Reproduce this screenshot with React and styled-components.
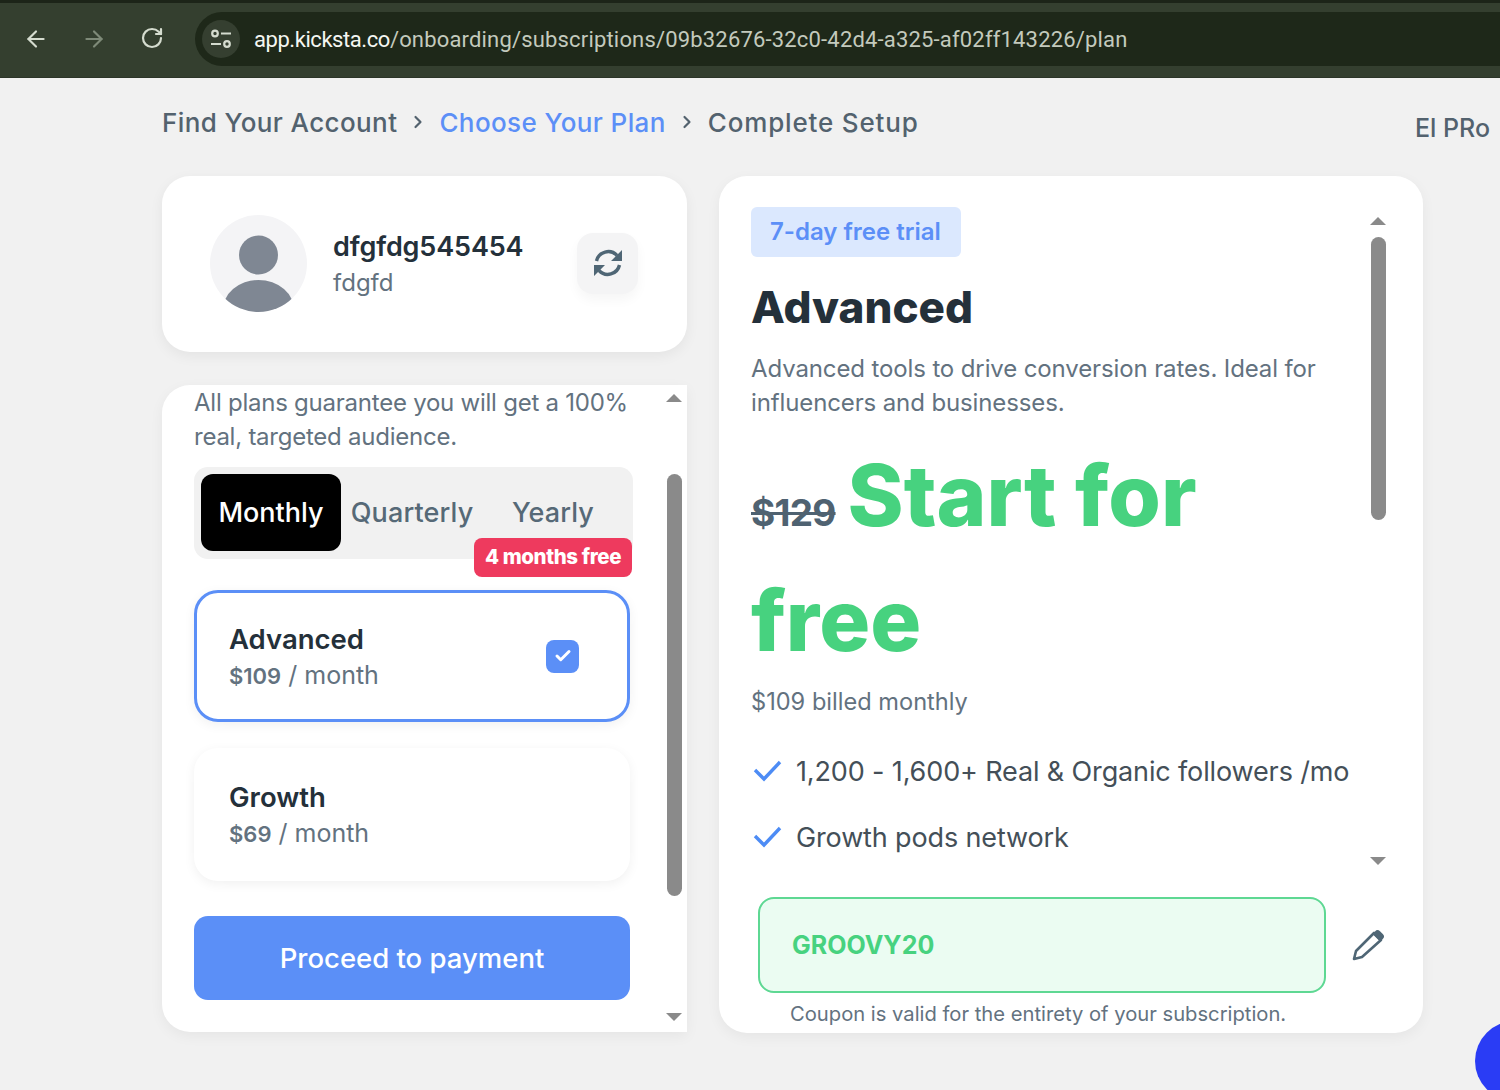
import React from "react";
import styled, { createGlobalStyle } from "styled-components";
import { ArrowLeft, ArrowRight, RotateCw, Check, ChevronRight } from "lucide-react";

const Global = createGlobalStyle`
  html, body {
    margin: 0;
    padding: 0;
    background: #f1f1f1;
    font-family: Inter, "Liberation Sans", sans-serif;
    overflow: hidden;
  }
  * { box-sizing: border-box; }
`;

const Page = styled.div`
  position: relative;
  width: 1500px;
  height: 1090px;
  overflow: hidden;
  display: flex;
  flex-direction: column;
`;

const BrowserBar = styled.div`
  height: 78px;
  flex: none;
  display: flex;
  align-items: center;
  padding-bottom: 2px;
  background: #343f2f;
  border-top: 3px solid #1c2418;
  border-bottom: 1px solid #2c3528;
`;

const NavButton = styled.div`
  width: 58px;
  flex: none;
  display: flex;
  justify-content: center;
  color: ${(p) => (p.$dim ? "#7e8a78" : "#d5dccf")};
`;

const NavGroup = styled.div`
  display: flex;
  margin-left: 7px;
  margin-right: 14px;
`;

const Address = styled.div`
  flex: 1;
  height: 54px;
  display: flex;
  align-items: center;
  gap: 14px;
  padding-left: 7px;
  background: #1e2819;
  border-radius: 27px 0 0 27px;
`;

const TuneBadge = styled.div`
  width: 38px;
  height: 38px;
  border-radius: 50%;
  background: #353f30;
  display: flex;
  align-items: center;
  justify-content: center;
  color: #d5dccf;
`;

const Url = styled.div`
  font-family: Roboto, sans-serif;
  font-size: 22px;
  letter-spacing: 0.008em;
  color: #c3cabd;
  white-space: nowrap;
  b {
    font-weight: 400;
    letter-spacing: -0.02em;
    color: #f4f6f1;
  }
`;

const Main = styled.div`
  flex: 1;
  padding: 0 10px 0 162px;
  display: flex;
  flex-direction: column;
`;

const Crumbs = styled.div`
  height: 98px;
  flex: none;
  display: flex;
  align-items: flex-start;
  justify-content: space-between;
`;

const Steps = styled.div`
  display: flex;
  align-items: center;
  height: 88px;
`;

const Step = styled.span`
  font-size: 26px;
  font-weight: 500;
  letter-spacing: ${(p) => (p.$wide ? "0.032em" : "0.015em")};
  color: ${(p) => (p.$active ? "#5c8ff7" : "#53626e")};
`;

const Sep = styled.span`
  width: 42px;
  display: flex;
  justify-content: center;
  color: #53626e;
`;

const UserName = styled.div`
  margin-top: 35px;
  font-size: 25px;
  font-weight: 500;
  color: #53626e;
`;

const Columns = styled.div`
  display: flex;
  gap: 32px;
  align-items: flex-start;
`;

const LeftColumn = styled.div`
  width: 525px;
  display: flex;
  flex-direction: column;
  gap: 33px;
`;

const ProfileCard = styled.div`
  height: 176px;
  padding: 0 49px 2px 48px;
  background: #fff;
  border-radius: 28px;
  box-shadow: 0 4px 14px rgba(0, 0, 0, 0.06);
  display: flex;
  align-items: center;
`;

const Avatar = styled.svg`
  width: 97px;
  height: 97px;
  flex: none;
  margin-right: 26px;
`;

const ProfileText = styled.div`
  flex: 1;
  padding-top: 4px;
`;

const Handle = styled.div`
  font-size: 27px;
  line-height: 36px;
  font-weight: 600;
  color: #24303a;
  letter-spacing: -0.005em;
`;

const FullName = styled.div`
  font-size: 24px;
  line-height: 36px;
  color: #63727f;
`;

const RefreshButton = styled.div`
  width: 61px;
  height: 61px;
  border-radius: 16px;
  background: #f4f4f5;
  box-shadow: 0 6px 12px rgba(0, 0, 0, 0.04);
  display: flex;
  align-items: center;
  justify-content: center;
  color: #4f6675;
`;

const PlansPanel = styled.div`
  height: 647px;
  background: #fff;
  border-radius: 28px 0 0 28px;
  display: flex;
  padding-left: 32px;
  box-shadow: 0 4px 14px rgba(0, 0, 0, 0.05);
`;

const PlansBody = styled.div`
  width: 439px;
  display: flex;
  flex-direction: column;
`;

const Guarantee = styled.div`
  margin-top: 1px;
  font-size: 24px;
  line-height: 34px;
  color: #63727f;
  letter-spacing: -0.01em;
  white-space: nowrap;
`;

const Tabs = styled.div`
  position: relative;
  margin-top: 13px;
  height: 92px;
  padding: 7px;
  background: #f1f1f1;
  border-radius: 14px;
  display: flex;
`;

const Tab = styled.div`
  width: ${(p) => p.$w}px;
  height: 77px;
  border-radius: 12px;
  display: flex;
  align-items: center;
  justify-content: center;
  font-size: 27px;
  font-weight: 500;
  letter-spacing: ${(p) => (p.$active ? "0" : "0.005em")};
  background: ${(p) => (p.$active ? "#000" : "transparent")};
  color: ${(p) => (p.$active ? "#fff" : "#566977")};
`;

const FreeBadge = styled.div`
  position: absolute;
  right: 1px;
  top: 71px;
  width: 158px;
  height: 39px;
  padding-bottom: 2px;
  background: #ee3a5e;
  border-radius: 8px;
  display: flex;
  align-items: center;
  justify-content: center;
  font-size: 20.5px;
  font-weight: 800;
  letter-spacing: -0.02em;
  color: #fff;
`;

const PlanCard = styled.div`
  width: 436px;
  height: ${(p) => (p.$selected ? 132 : 133)}px;
  margin-top: ${(p) => p.$mt}px;
  padding: 0 ${(p) => (p.$selected ? 48 : 33)}px 0 ${(p) => (p.$selected ? 32 : 35)}px;
  border-radius: 24px;
  background: #fff;
  border: ${(p) => (p.$selected ? "3px solid #5b8ff7" : "0")};
  box-shadow: 0 3px 12px rgba(0, 0, 0, 0.06);
  display: flex;
  align-items: center;
  justify-content: space-between;
`;

const PlanText = styled.div`
  padding-top: 2px;
`;

const PlanName = styled.div`
  font-size: 27.5px;
  line-height: 36px;
  font-weight: 600;
  color: #24303a;
`;

const PlanPrice = styled.div`
  font-size: 25px;
  line-height: 36px;
  color: #63727f;
  b {
    font-size: 22px;
    font-weight: 600;
  }
`;

const Tick = styled.div`
  width: 33px;
  height: 33px;
  border-radius: 8px;
  background: #5b8ff7;
  color: #fff;
  display: flex;
  align-items: center;
  justify-content: center;
`;

const PayButton = styled.div`
  width: 436px;
  height: 84px;
  margin-top: 35px;
  border-radius: 14px;
  background: #5b8ff7;
  display: flex;
  align-items: center;
  justify-content: center;
  color: #fff;
  font-size: 27.5px;
  font-weight: 500;
`;

const Scrollbar = styled.div`
  width: 20px;
  margin-left: ${(p) => p.$ml || 0}px;
  flex: none;
  height: ${(p) => p.$h}px;
  display: flex;
  flex-direction: column;
  align-items: center;
`;

const ArrowUp = styled.div`
  width: 0;
  height: 0;
  margin-top: ${(p) => p.$mt}px;
  border-left: 8px solid transparent;
  border-right: 8px solid transparent;
  border-bottom: 8px solid #8a8a8a;
`;

const ArrowDown = styled.div`
  width: 0;
  height: 0;
  margin-top: auto;
  margin-bottom: ${(p) => p.$mb}px;
  border-left: 8px solid transparent;
  border-right: 8px solid transparent;
  border-top: 8px solid #8a8a8a;
`;

const Thumb = styled.div`
  width: 15px;
  height: ${(p) => p.$h}px;
  margin-top: ${(p) => p.$mt}px;
  border-radius: 8px;
  background: #8a8a8a;
`;

const DetailCard = styled.div`
  width: 704px;
  height: 857px;
  padding: 31px 32px 0;
  background: #fff;
  border-radius: 28px;
  box-shadow: 0 4px 14px rgba(0, 0, 0, 0.05);
`;

const DetailScroll = styled.div`
  display: flex;
  height: 669px;
`;

const DetailBody = styled.div`
  width: 617px;
  flex: none;
`;

const TrialBadge = styled.div`
  display: inline-flex;
  align-items: center;
  width: 210px;
  height: 50px;
  padding: 0 0 2px 19px;
  border-radius: 6px;
  background: #dbe8fe;
  color: #5c8ff7;
  font-size: 24px;
  font-weight: 600;
`;

const DetailTitle = styled.h1`
  margin: 24px 0 0;
  font-size: 44px;
  line-height: 52px;
  font-weight: 800;
  color: #24303a;
`;

const DetailDesc = styled.div`
  margin-top: 19px;
  font-size: 24px;
  line-height: 34px;
  color: #63727f;
  letter-spacing: -0.005em;
`;

const PriceBlock = styled.div`
  margin-top: 13px;
  font-size: 85px;
  font-weight: 800;
  line-height: 125px;
  color: #47d27f;
`;

const OldPrice = styled.s`
  font-size: 37px;
  font-weight: 700;
  line-height: 1;
  color: #4f6271;
  margin-right: 12px;
  letter-spacing: -0.02em;
`;

const Billed = styled.div`
  margin-top: 2px;
  font-size: 23.6px;
  line-height: 34px;
  color: #63727f;
`;

const Features = styled.div`
  margin-top: 32px;
  display: flex;
  flex-direction: column;
  gap: 26px;
`;

const Feature = styled.div`
  display: flex;
  align-items: center;
  gap: 13px;
  height: 40px;
  padding-left: 2px;
  font-size: 27px;
  letter-spacing: -0.005em;
  color: #444f58;
  white-space: nowrap;
  svg {
    color: #4d8cf5;
    flex: none;
  }
`;

const CouponRow = styled.div`
  margin-top: 21px;
  padding-left: 7px;
  display: flex;
  align-items: center;
  gap: 26px;
`;

const CouponBox = styled.div`
  width: 568px;
  height: 96px;
  padding-left: 32px;
  display: flex;
  align-items: center;
  background: #ebfcf2;
  border: 2px solid #5ed893;
  border-radius: 16px;
  color: #47d27f;
  font-size: 25px;
  font-weight: 700;
`;

const CouponNote = styled.div`
  margin: 6px 0 0 39px;
  font-size: 20.2px;
  line-height: 30px;
  color: #63727f;
  white-space: nowrap;
`;

const ChatBubble = styled.div`
  position: absolute;
  left: 1475px;
  top: 1021px;
  width: 80px;
  height: 80px;
  border-radius: 50%;
  background: #2a3cf5;
`;

const TuneIcon = () => (
  <svg width="24" height="24" viewBox="0 0 24 24" fill="none" stroke="currentColor" strokeWidth="2.2">
    <circle cx="6" cy="6.5" r="2.8" />
    <path d="M12 6.5h10M2 17h10" />
    <circle cx="18" cy="17" r="2.8" />
  </svg>
);

const SyncIcon = () => (
  <svg width="32" height="32" viewBox="0 0 32 32">
    <path d="M4.5 14A12 12 0 0 1 25 8.5M27.5 18A12 12 0 0 1 7 23.5" fill="none" stroke="currentColor" strokeWidth="3.4" />
    <path d="M30 3v11H19zM2 29V18h11z" fill="currentColor" />
  </svg>
);

const PencilIcon = () => (
  <svg width="34" height="34" viewBox="0 0 34 34">
    <path d="M22 5l7 7L10 29l-8 2 2-8z" fill="none" stroke="#4f6675" strokeWidth="2.6" strokeLinejoin="round" />
    <path d="M23 3.5a3.5 3.5 0 0 1 5-0.2l2.8 2.8a3.5 3.5 0 0 1 0 5L28 13.5 20.5 6z" fill="#4f6675" />
  </svg>
);

const CheckMark = () => (
  <svg width="30" height="24" viewBox="0 0 30 24" fill="none" stroke="currentColor" strokeWidth="3.4">
    <path d="M2 11l9 9L27 3" />
  </svg>
);

function App() {
  return (
    <Page>
      <Global />
      <BrowserBar>
        <NavGroup>
          <NavButton><ArrowLeft size={26} strokeWidth={2} /></NavButton>
          <NavButton $dim><ArrowRight size={26} strokeWidth={2} /></NavButton>
          <NavButton><RotateCw size={24} strokeWidth={2.2} /></NavButton>
        </NavGroup>
        <Address>
          <TuneBadge><TuneIcon /></TuneBadge>
          <Url><b>app.kicksta.co</b>/onboarding/subscriptions/09b32676-32c0-42d4-a325-af02ff143226/plan</Url>
        </Address>
      </BrowserBar>
      <Main>
        <Crumbs>
          <Steps>
            <Step>Find Your Account</Step>
            <Sep><ChevronRight size={20} strokeWidth={2.6} /></Sep>
            <Step $active>Choose Your Plan</Step>
            <Sep><ChevronRight size={20} strokeWidth={2.6} /></Sep>
            <Step $wide>Complete Setup</Step>
          </Steps>
          <UserName>El PRo</UserName>
        </Crumbs>
        <Columns>
          <LeftColumn>
            <ProfileCard>
              <Avatar viewBox="0 0 97 97">
                <defs>
                  <clipPath id="avatar-clip"><circle cx="48.5" cy="48.5" r="48.5" /></clipPath>
                </defs>
                <circle cx="48.5" cy="48.5" r="48.5" fill="#f4f4f6" />
                <circle cx="48.5" cy="40" r="19.5" fill="#7f8793" />
                <g clipPath="url(#avatar-clip)">
                  <ellipse cx="48.5" cy="96" rx="36" ry="31" fill="#7f8793" />
                </g>
              </Avatar>
              <ProfileText>
                <Handle>dfgfdg545454</Handle>
                <FullName>fdgfd</FullName>
              </ProfileText>
              <RefreshButton><SyncIcon /></RefreshButton>
            </ProfileCard>
            <PlansPanel>
              <PlansBody>
                <Guarantee>All plans guarantee you will get a 100%<br />real, targeted audience.</Guarantee>
                <Tabs>
                  <Tab $active $w={140}>Monthly</Tab>
                  <Tab $w={142}>Quarterly</Tab>
                  <Tab $w={140}>Yearly</Tab>
                  <FreeBadge>4 months free</FreeBadge>
                </Tabs>
                <PlanCard $selected $mt={31}>
                  <PlanText>
                    <PlanName>Advanced</PlanName>
                    <PlanPrice><b>$109</b> / month</PlanPrice>
                  </PlanText>
                  <Tick><Check size={18} strokeWidth={4} /></Tick>
                </PlanCard>
                <PlanCard $mt={26}>
                  <PlanText>
                    <PlanName>Growth</PlanName>
                    <PlanPrice><b>$69</b> / month</PlanPrice>
                  </PlanText>
                </PlanCard>
                <PayButton>Proceed to payment</PayButton>
              </PlansBody>
              <Scrollbar $h={647} $ml={31}>
                <ArrowUp $mt={9} />
                <Thumb $mt={72} $h={422} />
                <ArrowDown $mb={11} />
              </Scrollbar>
            </PlansPanel>
          </LeftColumn>
          <DetailCard>
            <DetailScroll>
              <DetailBody>
                <TrialBadge>7-day free trial</TrialBadge>
                <DetailTitle>Advanced</DetailTitle>
                <DetailDesc>Advanced tools to drive conversion rates. Ideal for<br />influencers and businesses.</DetailDesc>
                <PriceBlock>
                  <OldPrice>$129</OldPrice><span>Start for</span><br /><span>free</span>
                </PriceBlock>
                <Billed>$109 billed monthly</Billed>
                <Features>
                  <Feature><CheckMark />1,200 - 1,600+ Real &amp; Organic followers /mo</Feature>
                  <Feature><CheckMark />Growth pods network</Feature>
                </Features>
              </DetailBody>
              <Scrollbar $h={669}>
                <ArrowUp $mt={10} />
                <Thumb $mt={12} $h={283} />
                <ArrowDown $mb={11} />
              </Scrollbar>
            </DetailScroll>
            <CouponRow>
              <CouponBox>GROOVY20</CouponBox>
              <PencilIcon />
            </CouponRow>
            <CouponNote>Coupon is valid for the entirety of your subscription.</CouponNote>
          </DetailCard>
        </Columns>
      </Main>
      <ChatBubble />
    </Page>
  );
}

export default App;
